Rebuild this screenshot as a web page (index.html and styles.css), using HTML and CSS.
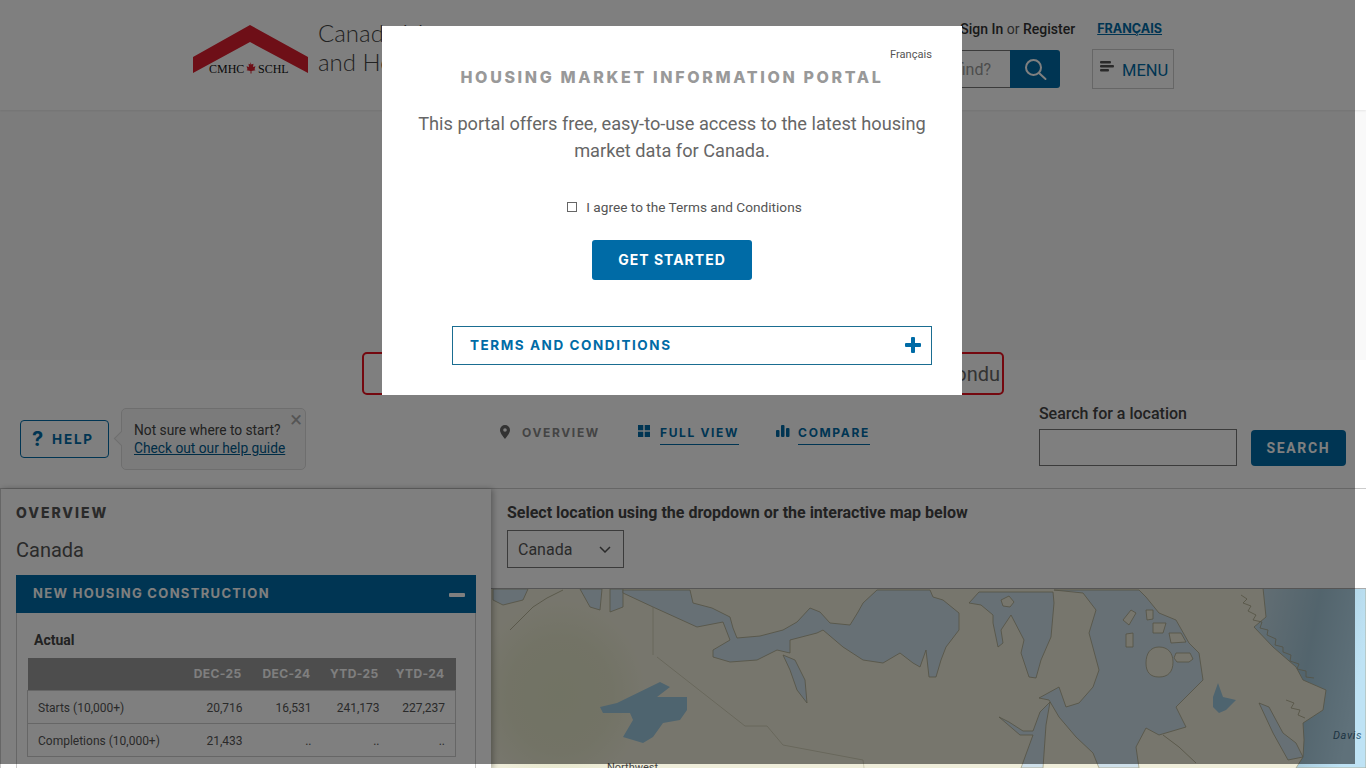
FILE: index.html
```html
<!DOCTYPE html>
<html lang="en">
<head>
  <meta charset="UTF-8" />
  <title>Housing Market Information Portal</title>
  <link rel="stylesheet" href="styles.css">
</head>
<body>
  <header class="site-header">
    <a class="logo" href="#">
      <svg class="logo-mark" width="116" height="50" viewBox="0 0 116 50">
        <polygon points="0,32 57,0 115,32 115,48 57,17 0,48" fill="#dc1f2e" />
        <text x="16" y="48" class="logo-text">CMHC</text>
        <path d="M57 37l1.500 2.500 2-.8-.5 3.300 2.500-.8-1 3 1 1-4 .8v2.500h-1v-2.500l-4-.8 1-1-1-3 2.500.8-.5-3.300 2 .8z" fill="#dc1f2e" />
        <text x="65" y="48" class="logo-text">SCHL</text>
      </svg>
      <span class="logo-name">Canada Mortgage<br>and Housing Corporation</span>
    </a>
    <div class="header-tools">
      <div class="account-row">
        <span class="account"><b>Sign In</b> or <b>Register</b></span>
        <a class="lang" href="#">FRANÇAIS</a>
      </div>
      <div class="search-row">
        <input class="site-search" type="text" placeholder="What can we help you find?">
        <button class="site-search-btn">
          <svg width="24" height="24" viewBox="0 0 24 24" fill="none" stroke="#fff" stroke-width="2">
            <circle cx="10.500" cy="10.500" r="7.500" />
            <path d="M16 16l6.500 6" stroke-linecap="round" />
          </svg>
        </button>
        <button class="menu-btn">
          <svg width="14" height="13" viewBox="0 0 14 13" fill="#555">
            <rect width="11" height="2.500" rx="1" />
            <rect y="4" width="14" height="2.500" rx="1" />
            <rect y="8" width="9" height="2.500" rx="1" />
          </svg>
          <span>MENU</span>
        </button>
      </div>
    </div>
  </header>

  <div class="banner"></div>
  <div class="alert"><span>condu</span></div>

  <section class="toolbar">
    <button class="help-btn"><span class="help-q">?</span>HELP</button>
    <div class="help-tip">
      <span class="tip-close">×</span>
      Not sure where to start?<br>
      <a href="#">Check out our help guide</a>
    </div>
    <nav class="tabs">
      <span class="tab tab-off">
        <svg width="10" height="14" viewBox="0 0 10 14"><path fill-rule="evenodd" d="M5 0a5 5 0 0 1 5 5c0 3-3 6.500-5 9-2-2.500-5-6-5-9a5 5 0 0 1 5-5zm0 3.200a1.800 1.800 0 1 0 0 3.600 1.800 1.800 0 0 0 0-3.600z" fill="#666" /></svg>
        <span>OVERVIEW</span>
      </span>
      <a class="tab" href="#">
        <svg width="12" height="12" viewBox="0 0 12 12" fill="#006ba6"><rect width="5.300" height="5.300" /><rect x="6.700" width="5.300" height="5.300" /><rect y="6.700" width="5.300" height="5.300" /><rect x="6.700" y="6.700" width="5.300" height="5.300" /></svg>
        <span class="tab-label">FULL VIEW</span>
      </a>
      <a class="tab tab-tight" href="#">
        <svg width="14" height="12" viewBox="0 0 14 12" fill="#006ba6"><rect y="5" width="3.500" height="7" rx="1" /><rect x="5" width="3.500" height="12" rx="1" /><rect x="10" y="3" width="3.500" height="9" rx="1" /></svg>
        <span class="tab-label">COMPARE</span>
      </a>
    </nav>
    <div class="location-search">
      <label class="location-label">Search for a location</label>
      <div class="location-row">
        <input class="location-input" type="text">
        <button class="location-btn">SEARCH</button>
      </div>
    </div>
  </section>

  <main class="content">
    <aside class="panel">
      <h2 class="panel-title">OVERVIEW</h2>
      <div class="panel-place">Canada</div>
      <div class="accordion-head">
        <span>NEW HOUSING CONSTRUCTION</span>
        <i class="minus"></i>
      </div>
      <div class="accordion-body">
        <h3 class="actual">Actual</h3>
        <table class="stats">
          <thead>
            <tr><th></th><th>DEC-25</th><th>DEC-24</th><th>YTD-25</th><th>YTD-24</th></tr>
          </thead>
          <tbody>
            <tr><td>Starts (10,000+)</td><td>20,716</td><td>16,531</td><td>241,173</td><td>227,237</td></tr>
            <tr><td>Completions (10,000+)</td><td>21,433</td><td>..</td><td>..</td><td>..</td></tr>
          </tbody>
        </table>
      </div>
    </aside>
    <section class="map-side">
      <div class="map-controls">
        <h3 class="map-title">Select location using the dropdown or the interactive map below</h3>
        <div class="place-select">
          <span>Canada</span>
          <svg width="12" height="7" viewBox="0 0 12 7" fill="none" stroke="#555" stroke-width="1.500"><path d="M1 1l5 5 5-5" /></svg>
        </div>
      </div>
      <svg class="map" width="875" height="180" viewBox="491 588 875 180">
        <defs>
          <linearGradient id="ocean" x1="0" x2="1" y1="0" y2="0.300">
            <stop offset="0" stop-color="#c9dfe9" />
            <stop offset="0.550" stop-color="#a6c9da" />
            <stop offset="1" stop-color="#bfe3f5" />
          </linearGradient>
          <radialGradient id="forest" cx="0.500" cy="0.500" r="0.500">
            <stop offset="0" stop-color="#e3e6c8" />
            <stop offset="0.600" stop-color="#e6e7cc" />
            <stop offset="1" stop-color="#efedda" />
          </radialGradient>
        </defs>
        <rect x="491" y="588" width="875" height="180" fill="#efedda" />
        <ellipse cx="560" cy="695" rx="85" ry="95" fill="url(#forest)" />
        <g class="water">
          <path d="M493 589L528 589 523 600 503 605 493 600Z" />
          <path d="M580 589L602 589 600 610 590 607Z" />
          <path d="M610 589L623 589 623 607 610 612Z" />
          <path d="M623 590L690 590 693 603 712 608 730 617 733 628 737 638 760 636 783 630 797 622 810 608 820 612 830 623 850 625 858 612 863 603 877 590 930 590 933 597 943 600 959 613 959 630 946 647 941 660 936 677 929 677 926 650 920 667 913 663 900 653 883 663 863 660 843 647 823 630 817 633 790 640 790 653 777 650 757 660 730 662 713 657 713 650 730 640 723 622 697 627 675 617 653 607 623 593Z" />
          <path d="M969 603L979 592 1053 592 1054 603 1051 637 1041 660 1036 678 1029 677 1021 653 1024 640 1011 615 1001 630 1003 643 998 647 993 623 993 615 981 605Z" />
          <path d="M1054 590L1083 593 1096 610 1089 633 1099 670 1093 687 1079 703 1066 707 1059 687 1039 698 1049 700 1059 717 1076 737 1093 753 1099 768 1139 768 1136 747 1146 728 1159 735 1186 727 1176 707 1203 680 1199 653 1189 643 1176 620 1159 613 1146 597 1139 590Z" />
          <path d="M999 717L1009 722 1023 731 1033 731 1040 712 1050 702 1046 725 1043 768 1021 768 1033 735 1020 735Z" />
          <path d="M783 655L795 660 805 680 807 703 797 690 790 670Z" />
          <path d="M1259 703L1269 707 1283 733 1296 743 1303 757 1288 760 1273 733Z" />
          <path class="ocean" d="M1263 588L1266 617 1254 627 1273 647 1296 667 1303 680 1326 690 1323 710 1303 723 1304 740 1303 757 1296 768 1366 768 1366 588Z" />
        </g>
        <g class="lake">
          <path d="M600 707L617 703 660 682 670 687 657 697 687 697 687 710 680 720 663 723 653 737 643 743 623 737 633 720 630 713 603 713Z" />
          <path d="M1213 697L1218 683 1223 697 1236 700 1226 710 1219 713 1213 707Z" />
        </g>
        <g class="land">
          <path d="M1159 647C1168 647 1173 653 1173 662 1173 672 1168 677 1159 677 1150 677 1146 672 1146 663 1146 654 1150 647 1159 647Z" />
          <path d="M1176 653L1190 653 1193 659 1189 662 1177 662 1174 658Z" />
          <path d="M1123 620L1131 610 1136 613 1129 625Z" />
          <path d="M1126 634L1133 633 1133 647 1126 647Z" />
          <path d="M1146 610L1153 610 1153 619 1147 620Z" />
          <path d="M1153 623L1166 623 1163 633 1153 633Z" />
          <path d="M1169 633L1181 633 1186 642 1171 643Z" />
          <path d="M1001 600L1009 596 1014 602 1010 607 1003 606Z" />
        </g>
        <g class="coast" fill="none">
          <path d="M510 630L518 622 533 607 547 598 563 590" />
          <path d="M1163 735L1179 747 1196 763" />
          <path d="M1241 595l6 4-4 4 8 3-3 5 8 4-3 5 9 2-2 6 8 2-1 5 9 4-1 6 8 2 0 5 8 3-1 6 9 3-2 5 9 2 0 6 8 1" />
          <path d="M1286 700l8 3-3 5 9 2-2 5 7 3" />
        </g>
        <g class="borders" fill="none">
          <path d="M653 607V655" />
          <path d="M657 657L745 726 767 726 783 745 863 760 864 768" />
        </g>
        <path class="map-top" d="M491 588.500H1366" />
        <text class="map-region" x="607" y="771">Northwest</text>
        <text class="map-sea" x="1333" y="739">Davis</text>
      </svg>
    </section>
  </main>

  <div class="overlay"></div>

  <div class="modal">
    <a class="modal-lang" href="#">Français</a>
    <h1 class="modal-title">HOUSING MARKET INFORMATION PORTAL</h1>
    <p class="modal-text">This portal offers free, easy-to-use access to the latest housing market data for Canada.</p>
    <label class="agree"><i class="agree-box"></i>I agree to the Terms and Conditions</label>
    <button class="start-btn">GET STARTED</button>
    <div class="terms">
      <span>TERMS AND CONDITIONS</span>
      <svg width="16" height="16" viewBox="0 0 16 16" fill="#006ba6"><rect x="6" width="4" height="16" rx="1" /><rect y="6" width="16" height="4" rx="1" /></svg>
    </div>
  </div>
</body>
</html>
```

FILE: styles.css
```css
html, body {
  margin: 0;
  padding: 0;
  height: 768px;
  overflow: hidden;
  background: #fff;
  font-family: Roboto, sans-serif;
  color: #555;
}

button {
  font-family: inherit;
  cursor: pointer;
}

a {
  color: inherit;
}

/* header */
.site-header {
  display: flex;
  height: 110px;
  box-sizing: border-box;
  padding: 21px 192px 0 193px;
  background: #fff;
  position: relative;
  z-index: 1;
  box-shadow: 0 1px 2px rgba(0,0,0,0.08);
}

.logo {
  display: flex;
  gap: 9px;
  align-items: flex-start;
  margin-top: 4px;
  text-decoration: none;
}

.logo-text {
  font-family: "Liberation Serif", serif;
  font-size: 12px;
  fill: #111;
}

.logo-name {
  font-family: Lato, sans-serif;
  font-weight: 300;
  font-size: 24px;
  line-height: 29px;
  color: #444;
  margin-top: -7px;
}

.header-tools {
  margin-left: auto;
}

.account-row {
  display: flex;
  justify-content: flex-end;
  align-items: center;
  gap: 22px;
  height: 15px;
  padding-right: 12px;
}

.account {
  font-size: 14px;
}

.account b {
  font-weight: 500;
  color: #333;
}

.lang {
  font-family: Inter, sans-serif;
  font-weight: 700;
  font-size: 12.600px;
  color: #006ba6;
}

.search-row {
  display: flex;
  align-items: flex-start;
  margin-top: 13px;
}

.site-search {
  width: 240px;
  height: 38px;
  box-sizing: border-box;
  margin-top: 1px;
  padding: 0 19px 0 0;
  border: 1px solid #777;
  border-right: none;
  background: #fff;
  font: 16px Roboto, sans-serif;
  text-align: right;
}

.site-search::placeholder {
  color: #999;
}

.site-search-btn {
  width: 50px;
  height: 38px;
  margin-top: 1px;
  padding: 0;
  border: none;
  border-radius: 0 3px 3px 0;
  background: #006ba6;
  display: flex;
  align-items: center;
  justify-content: center;
}

.menu-btn {
  display: flex;
  align-items: center;
  gap: 8px;
  width: 82px;
  height: 40px;
  box-sizing: border-box;
  margin-left: 32px;
  padding: 0 0 0 7px;
  border: 1px solid #ccc;
  background: #fff;
  color: #006ba6;
  font-size: 16.500px;
}

.menu-btn span {
  padding-top: 2px;
}

.menu-btn svg {
  margin-top: -4px;
}

/* band and alert */
.banner {
  height: 250px;
  background: #f9f9f9;
}

.alert {
  display: flex;
  justify-content: flex-end;
  align-items: center;
  overflow: hidden;
  position: relative;
  width: 642px;
  height: 43px;
  box-sizing: border-box;
  margin: -8px 0 0 362px;
  padding-right: 2px;
  border: 2px solid #e8101e;
  border-radius: 5px;
  background: #fff;
  font-size: 20px;
  color: #666;
}

/* help, tabs, search */
.toolbar {
  display: flex;
  height: 93px;
  box-sizing: border-box;
  padding: 13px 20px 0;
}

.help-btn {
  display: flex;
  align-items: center;
  gap: 7px;
  width: 89px;
  height: 38px;
  margin-top: 12px;
  padding: 0 0 1px 11px;
  border: 1px solid #006ba6;
  border-radius: 4px;
  background: #fff;
  color: #006ba6;
  font-family: Inter, sans-serif;
  font-weight: 700;
  font-size: 13.500px;
  letter-spacing: 1.800px;
}

.help-q {
  font-size: 20px;
}

.help-tip {
  position: relative;
  width: 185px;
  height: 62px;
  box-sizing: border-box;
  margin-left: 12px;
  padding: 12px 0 0 12px;
  border: 1px solid #ddd;
  border-radius: 5px;
  background: #f7f7f7;
  font-size: 13.750px;
  line-height: 18px;
  color: #444;
}

.help-tip::before {
  content: "";
  position: absolute;
  left: -6px;
  top: 24px;
  width: 10px;
  height: 10px;
  background: #f7f7f7;
  border-left: 1px solid #ddd;
  border-bottom: 1px solid #ddd;
  transform: rotate(45deg);
}

.help-tip a {
  color: #005a8c;
}

.tip-close {
  position: absolute;
  top: 1px;
  right: 3px;
  font-size: 22px;
  line-height: 20px;
  color: #aaa;
}

.tabs {
  display: flex;
  gap: 38px;
  margin: 16px 0 0 194px;
}

.tab {
  display: flex;
  align-items: flex-start;
  gap: 10px;
  text-decoration: none;
  font-family: Inter, sans-serif;
  font-weight: 700;
  font-size: 12px;
  letter-spacing: 1.650px;
  color: #006ba6;
}

.tab svg {
  margin-top: 1px;
}

.tab-off {
  gap: 12px;
  color: #888;
}

.tab-tight {
  gap: 8px;
  margin-left: -1px;
}

.tab-label {
  padding-bottom: 5px;
  border-bottom: 1px solid #006ba6;
  height: 15px;
  line-height: 17px;
}

.tab-off span {
  line-height: 17px;
}

.location-search {
  margin: -3px 0 0 169px;
}

.location-label {
  display: block;
  font-size: 16px;
  font-weight: 500;
  line-height: 18px;
  color: #444;
}

.location-row {
  display: flex;
  gap: 14px;
  margin-top: 6px;
}

.location-input {
  width: 198px;
  height: 37px;
  box-sizing: border-box;
  border: 1px solid #777;
  background: #fff;
}

.location-btn {
  width: 95px;
  height: 36px;
  margin-top: 1px;
  border: none;
  border-radius: 4px;
  background: #006ba6;
  color: #fff;
  font-weight: 700;
  font-size: 14px;
  letter-spacing: 1.600px;
}

/* main area */
.content {
  display: flex;
  height: 280px;
  border-top: 1px solid #ccc;
}

.panel {
  position: relative;
  z-index: 1;
  width: 491px;
  box-sizing: border-box;
  padding: 16px 15px 0 15px;
  border-left: 1px solid #ccc;
  background: #fff;
  box-shadow: 2px 0 6px rgba(0,0,0,0.3);
}

.panel-title {
  margin: 0;
  font-family: Inter, sans-serif;
  font-weight: 800;
  font-size: 14px;
  line-height: 16px;
  letter-spacing: 1.950px;
  color: #555;
}

.panel-place {
  margin-top: 16px;
  font-size: 20px;
  line-height: 26px;
  color: #555;
}

.accordion-head {
  display: flex;
  justify-content: space-between;
  align-items: center;
  height: 38px;
  box-sizing: border-box;
  margin-top: 12px;
  padding: 0 11px 2px 17px;
  background: #006ba6;
  color: #fff;
  font-family: Inter, sans-serif;
  font-weight: 700;
  font-size: 13px;
  letter-spacing: 1.320px;
}

.minus {
  width: 16px;
  height: 4px;
  margin-top: 3px;
  border-radius: 1px;
  background: #fff;
}

.accordion-body {
  height: 200px;
  box-sizing: border-box;
  padding: 0 19px 0 11px;
  border: 1px solid #ccc;
  border-top: none;
}

.actual {
  margin: 0;
  padding: 18px 0 9px 6px;
  font-size: 14px;
  line-height: 18px;
  font-weight: 700;
  color: #444;
}

.stats {
  width: 428px;
  margin-left: -1px;
  table-layout: fixed;
  border-collapse: collapse;
  font-size: 12px;
  color: #555;
}

.stats th {
  height: 32px;
  box-sizing: border-box;
  padding: 0 11px 0 0;
  background: #9a9a9a;
  color: #fff;
  font-family: Inter, sans-serif;
  font-weight: 700;
  font-size: 12px;
  letter-spacing: 0.400px;
  text-align: right;
}

.stats th:nth-child(1) { width: 153px; }
.stats th:nth-child(2) { width: 72px; }
.stats th:nth-child(3) { width: 69px; }
.stats th:nth-child(4) { width: 68px; }
.stats th:nth-child(5) { width: 66px; }

.stats td {
  height: 33px;
  padding: 2px 10px 0 0;
  box-sizing: border-box;
  border-top: 1px solid #ccc;
  border-bottom: 1px solid #ccc;
  text-align: right;
}

.stats td:first-child {
  padding-left: 10px;
  text-align: left;
  border-left: 1px solid #ccc;
}

.stats td:last-child {
  border-right: 1px solid #ccc;
}

.map-side {
  flex: 1;
  min-width: 0;
}

.map-controls {
  height: 99px;
  box-sizing: border-box;
  padding: 14px 0 0 16px;
}

.map-title {
  margin: 0;
  font-size: 16px;
  line-height: 19px;
  font-weight: 700;
  color: #444;
}

.place-select {
  display: flex;
  justify-content: space-between;
  align-items: center;
  width: 117px;
  height: 38px;
  box-sizing: border-box;
  margin-top: 8px;
  padding: 0 12px 0 10px;
  border: 1px solid #777;
  font-size: 16px;
  color: #555;
}

.map {
  display: block;
}

.water path {
  fill: #cfe0ea;
  stroke: #a8a588;
  stroke-width: 0.8;
}

.water .ocean {
  fill: url(#ocean);
}

.lake path {
  fill: #9cc8de;
}

.land path {
  fill: #efedda;
  stroke: #a8a588;
  stroke-width: 0.8;
}

.coast path {
  stroke: #a8a588;
  stroke-width: 0.8;
}

.borders path {
  stroke: #c9c6ae;
  stroke-width: 0.8;
}

.map-top {
  stroke: #aaa;
  stroke-width: 1;
}

.map-region {
  font: 11px Roboto, sans-serif;
  fill: #444;
}

.map-sea {
  font: italic 11px Roboto, sans-serif;
  letter-spacing: 0.600px;
  fill: #3d6a86;
}

/* dim layer stops short of the right and bottom edges */
.overlay {
  position: fixed;
  top: 0;
  left: 0;
  width: 1355px;
  height: 764px;
  background: rgba(0,0,0,0.5);
  z-index: 5;
}

/* modal */
.modal {
  position: fixed;
  top: 26px;
  left: 382px;
  width: 580px;
  height: 369px;
  box-sizing: border-box;
  padding: 22px 30px 0;
  display: flex;
  flex-direction: column;
  align-items: center;
  background: #fff;
  z-index: 6;
}

.modal-lang {
  align-self: flex-end;
  font-size: 11.100px;
  line-height: 14px;
  text-decoration: none;
  color: #555;
}

.modal-title {
  margin: 6px 0 0;
  font-family: Inter, sans-serif;
  font-weight: 800;
  font-size: 16px;
  line-height: 18px;
  letter-spacing: 2.650px;
  color: #999;
}

.modal-text {
  width: 530px;
  margin: 24px 0 0;
  font-size: 18.200px;
  line-height: 27px;
  text-align: center;
  color: #666;
}

.agree {
  display: flex;
  align-items: center;
  gap: 9px;
  margin: 34px 0 0 25px;
  font-size: 13.650px;
  line-height: 18px;
  color: #555;
}

.agree-box {
  width: 8px;
  height: 8px;
  border: 1px solid #666;
}

.start-btn {
  width: 160px;
  height: 40px;
  margin-top: 24px;
  padding: 0 0 1px;
  border: none;
  border-radius: 3px;
  background: #006ba6;
  color: #fff;
  font-family: Inter, sans-serif;
  font-weight: 700;
  font-size: 14px;
  letter-spacing: 1px;
}

.terms {
  display: flex;
  justify-content: space-between;
  align-items: center;
  align-self: flex-end;
  width: 480px;
  height: 39px;
  box-sizing: border-box;
  margin-top: 46px;
  padding: 0 10px 2px 17px;
  border: 1px solid #1a6d91;
  color: #006ba6;
  font-family: Inter, sans-serif;
  font-weight: 700;
  font-size: 13.500px;
  letter-spacing: 1.550px;
}
```
